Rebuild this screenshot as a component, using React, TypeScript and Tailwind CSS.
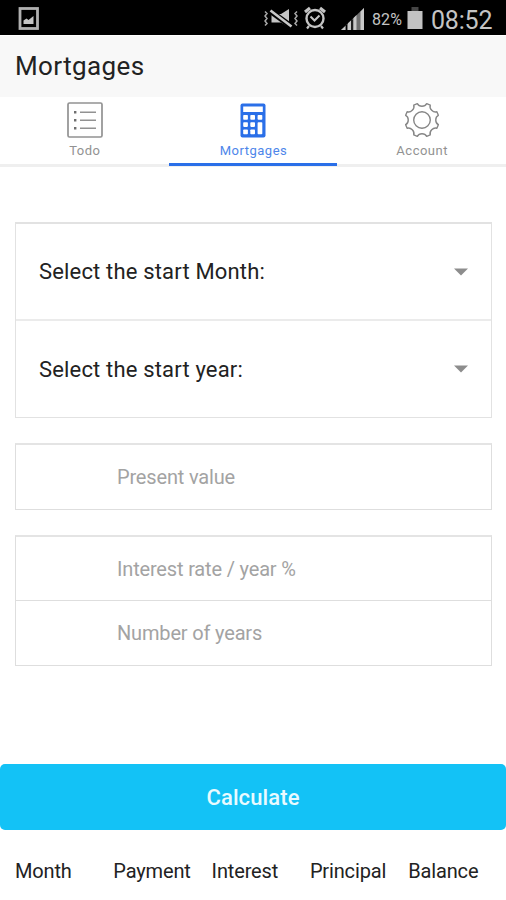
const tabs = [
  { name: "Todo", icon: <ListIcon /> },
  { name: "Mortgages", icon: <CalculatorIcon />, active: true },
  { name: "Account", icon: <GearIcon /> },
];

const columns = ["Month", "Payment", "Interest", "Principal", "Balance"];

function ListIcon() {
  return (
    <svg width="36" height="36" viewBox="0 0 36 36" fill="none" stroke="#929292">
      <rect x="1" y="1" width="34" height="34" rx="1.5" strokeWidth="1.7" />
      <path d="M13 10.2h16M13 18.2h16M13 26.2h16" strokeWidth="1.5" />
      <path d="M7 10.2h2.4M7 18.2h2.4M7 26.2h2.4" stroke="#6e6e6e" strokeWidth="2.4" />
    </svg>
  );
}

function CalculatorIcon() {
  return (
    <svg width="26" height="35" viewBox="0 0 26 35">
      <rect x="0.5" y="0.5" width="25" height="34" rx="2" fill="#2a6fe8" />
      <g fill="#fff">
        <rect x="3.2" y="3.5" width="19.6" height="5.5" />
        <rect x="3.2" y="12" width="4.7" height="4.7" rx="0.8" />
        <rect x="10.3" y="12" width="4.7" height="4.7" rx="0.8" />
        <rect x="17.6" y="12" width="4.7" height="4.7" rx="0.8" />
        <rect x="3.2" y="19.2" width="4.7" height="4.7" rx="0.8" />
        <rect x="10.3" y="19.2" width="4.7" height="4.7" rx="0.8" />
        <rect x="17.6" y="19.2" width="4.7" height="12" rx="0.8" />
        <rect x="3.2" y="26.5" width="4.7" height="4.7" rx="0.8" />
        <rect x="10.3" y="26.5" width="4.7" height="4.7" rx="0.8" />
      </g>
    </svg>
  );
}

// eight flat teeth with a scooped notch between each pair
function gearPath() {
  const point = (r: number, deg: number) => {
    const a = (deg * Math.PI) / 180;
    return `${(18 + r * Math.cos(a)).toFixed(2)} ${(18 + r * Math.sin(a)).toFixed(2)}`;
  };
  let d = `M${point(17, 16)}`;
  for (let i = 0; i < 8; i++) {
    const t = i * 45 + 22.5;
    d += `L${point(17, t + 6.5)}C${point(13.2, t + 10)} ${point(13.2, t + 35)} ${point(17, t + 38.5)}`;
  }
  return d + "Z";
}

function GearIcon() {
  return (
    <svg width="36" height="36" viewBox="0 0 36 36" fill="none" stroke="#868686" strokeWidth="1.4" strokeLinejoin="round">
      <path d={gearPath()} />
      <circle cx="18" cy="18" r="8.3" />
    </svg>
  );
}

function StatusBar() {
  return (
    <div className="flex h-[35px] items-center bg-black text-[#c4c4c4]">
      <svg className="ml-[18px] mt-[2px]" width="21" height="23" viewBox="0 0 21 23">
        <rect x="2" y="1.5" width="17.5" height="20" fill="none" stroke="#b0b0b0" strokeWidth="2.8" />
        <path d="M5.5 17v-3.5l3-2 2 1.5 5-4v8z" fill="#c4c4c4" />
      </svg>
      <svg className="ml-auto mt-[2px]" width="34" height="22" viewBox="0 0 34 22" fill="none" stroke="#a8a8a8" strokeWidth="1.5">
        <path d="M1 3.5l2 2-2 2.500 2 2.500-2 2.500 2 2.500-2 2M33 3.500l-2 2 2 2.500-2 2.500 2 2.500-2 2.500 2 2" />
        <path d="M7.5 6h9.500l8-5v18l-8-4.500H7.500z" fill="#c4c4c4" stroke="none" />
        <path d="M5.500 2.500l22 16" stroke="#000" strokeWidth="5.600" />
        <path d="M6.500 2.500l21 16" stroke="#c8c8c8" strokeWidth="2.600" />
      </svg>
      <svg className="ml-[6px] mt-px" width="22" height="24" viewBox="0 0 22 24" fill="none" stroke="#c4c4c4">
        <circle cx="11" cy="12.5" r="8.5" strokeWidth="2.4" />
        <path d="M1 6l5-4M21 6l-5-4" strokeWidth="3.2" />
        <path d="M6.5 10.5l4 4 5-5" strokeWidth="2" />
        <path d="M5 20l-2 2.5M17 20l2 2.5" strokeWidth="2.2" />
      </svg>
      <svg className="ml-[15px] mt-[2px]" width="24" height="24" viewBox="0 0 24 24">
        <path d="M0 23l23-22v22z" fill="#6f6f6f" />
        <path d="M0 23l5-4.5v4.5zM7 16.3l3-2.9v9.6h-3zM12.5 11l3-2.9v14.9h-3zM19.5 4.4l3.5-3.4v22h-3.5z" fill="#c8c8c8" />
        <path d="M5.300 18v5M11 12.500v10.500" stroke="#000" strokeWidth="1.400" />
      </svg>
      <span className="ml-[7px] mt-[5px] w-[32px] whitespace-nowrap text-[16px] tracking-[0.1px]">82%</span>
      <svg className="ml-[3px] mt-px" width="16" height="24" viewBox="0 0 16 24">
        <rect x="4.5" y="1" width="7" height="5" fill="#454545" />
        <rect x="0.5" y="5" width="15" height="18" fill="#c2c2c2" />
      </svg>
      <span className="ml-[8px] mr-[13px] mt-[5px] w-[62px] whitespace-nowrap text-[25px] leading-none tracking-[-0.2px]">
        08:52
      </span>
    </div>
  );
}

function SelectRow({ label }: { label: string }) {
  return (
    <div className="flex h-[96px] items-center justify-between pl-[23px] pr-[23px] first:h-[97px]">
      <span className="text-[22px] tracking-[0.17px] text-[#222]">{label}</span>
      <svg width="14" height="8" viewBox="0 0 14 8" fill="#8d8d8d">
        <path d="M0 0.5h14l-7 7z" />
      </svg>
    </div>
  );
}

function InputRow({ placeholder }: { placeholder: string }) {
  return (
    <input
      className="block h-[64px] w-full bg-transparent pl-[101px] text-[20px] tracking-[-0.17px] outline-none placeholder:text-[#a3a3a3]"
      placeholder={placeholder}
    />
  );
}

export default function App() {
  return (
    <div className="h-[900px] w-[506px] overflow-hidden bg-white font-[Roboto,sans-serif] text-[#222]">
      <StatusBar />
      <header className="flex h-[62px] items-center border-t border-white bg-[#f8f8f8] pb-[2px] pl-[15px]">
        <h1 className="text-[26px] font-[450] leading-none tracking-[0.4px]">Mortgages</h1>
      </header>
      <nav className="grid h-[70px] grid-cols-3 border-b-[3px] border-[#efefef]">
        {tabs.map((tab) => (
          <a
            key={tab.name}
            className={
              tab.active
                ? "-mb-[2px] flex flex-col items-center border-b-[3px] border-[#2a6fe8] pt-[5px] text-[#4e86ea]"
                : "flex flex-col items-center pt-[5px] text-[#929292]"
            }
          >
            <span className="ml-px flex h-9 items-center">{tab.icon}</span>
            <span className="ml-px mt-[5px] text-[13px] leading-4 tracking-[0.5px]">{tab.name}</span>
          </a>
        ))}
      </nav>

      <main className="mt-[55px]">
        <form className="ml-[15px] mr-[14px] flex flex-col gap-[25px]">
          <div className="divide-y-2 divide-[#ebebeb] border border-t-2 border-[#e2e2e2]">
            <SelectRow label="Select the start Month:" />
            <SelectRow label="Select the start year:" />
          </div>
          <div className="border border-t-2 border-[#dedede] border-t-[#e4e4e4]">
            <InputRow placeholder="Present value" />
          </div>
          <div className="divide-y divide-[#dedede] border border-t-2 border-[#dedede] border-t-[#e4e4e4]">
            <InputRow placeholder="Interest rate / year %" />
            <InputRow placeholder="Number of years" />
          </div>
        </form>
        <button className="mt-[98px] block h-[66px] w-full rounded-[5px] bg-[#13c2f6] text-[22px] font-medium tracking-[0.1px] text-[#e9faff]">
          Calculate
        </button>
        <div className="mt-[26px] grid grid-cols-[repeat(5,98.3px)] pl-[15px] text-[20px] leading-[30px] tracking-[-0.15px]">
          {columns.map((column) => (
            <span key={column}>{column}</span>
          ))}
        </div>
      </main>
    </div>
  );
}
